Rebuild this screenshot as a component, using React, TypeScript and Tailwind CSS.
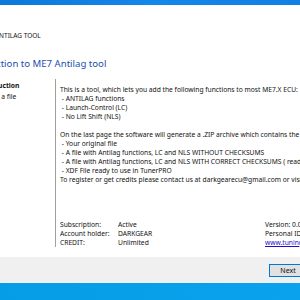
export default function App() {
  const font = { fontFamily: '"Noto Sans", "Open Sans", sans-serif' };

  return (
    <div
      className="w-[300px] h-[300px] overflow-hidden flex flex-col bg-white text-[#111] text-[6.7px]"
      style={font}
    >
      <div className="h-[5px] shrink-0 bg-gradient-to-r from-[#0b78da] via-[#1487ea] to-[#0f80e4]" />

      <div className="h-[252px] shrink-0 flex flex-col overflow-hidden">
        <div className="mt-[26px] h-[10px] leading-[10px] whitespace-nowrap text-[6.5px]">
          <span className="-ml-[20px]">ME7 ANTILAG TOOL</span>
        </div>

        <div className="mt-[16px] h-[14px] leading-[14px] whitespace-nowrap text-[9.6px] text-[#1c4fae]">
          <span className="-ml-[38px]">Introduction to ME7 Antilag tool</span>
        </div>

        <div className="mt-[8px] flex flex-1 min-h-0">
          <div className="w-[56px] shrink-0 border-r border-[#a0a0a0] mb-[10px] pt-[1px] whitespace-nowrap">
            <div className="h-[11px] leading-[11px] font-bold">
              <span className="-ml-[23px]">Introduction</span>
            </div>
            <div className="h-[11px] leading-[11px]">
              <span className="-ml-[16px]">Load a file</span>
            </div>
          </div>

          <div className="flex-1 min-w-0 pl-[4px] pt-[6px] flex flex-col whitespace-nowrap leading-[9px]">
            <p>This is a tool, which lets you add the following functions to most ME7.X ECU:</p>
            <p>&nbsp;- ANTILAG functions</p>
            <p>&nbsp;- Launch-Control (LC)</p>
            <p>&nbsp;- No Lift Shift (NLS)</p>
            <p>&nbsp;</p>
            <p>On the last page the software will generate a .ZIP archive which contains the following files:</p>
            <p>&nbsp;- Your original file</p>
            <p>&nbsp;- A file with Antilag functions, LC and NLS WITHOUT CHECKSUMS</p>
            <p>&nbsp;- A file with Antilag functions, LC and NLS WITH CORRECT CHECKSUMS ( ready to flash )</p>
            <p>&nbsp;- XDF File ready to use in TunerPRO</p>
            <p>To register or get credits please contact us at darkgearecu@gmail.com or visit our website</p>

            <div className="mt-auto mb-[10px] flex">
              <div className="grid grid-cols-[58px_auto] w-[205px] shrink-0">
                <span>Subscription:</span>
                <span>Active</span>
                <span>Account holder:</span>
                <span>DARKGEAR</span>
                <span>CREDIT:</span>
                <span>Unlimited</span>
              </div>
              <div className="flex flex-col shrink-0">
                <span>Version: 0.0.1</span>
                <span>Personal ID: 0000</span>
                <span className="text-[#1a0dcc] underline">www.tuninglab.eu</span>
              </div>
            </div>
          </div>
        </div>
      </div>

      <div className="h-[26px] shrink-0 bg-[#f0f0f0] flex items-center pl-[269px]">
        <button
          type="button"
          className="h-[13px] w-[38px] shrink-0 border border-[#0078d7] bg-[#e1e1e1] text-[7px] leading-[11px] text-[#111]"
        >
          Next
        </button>
      </div>

      <div className="flex-1 bg-gradient-to-r from-[#049de6] to-[#0aa2ec]" />
    </div>
  );
}
